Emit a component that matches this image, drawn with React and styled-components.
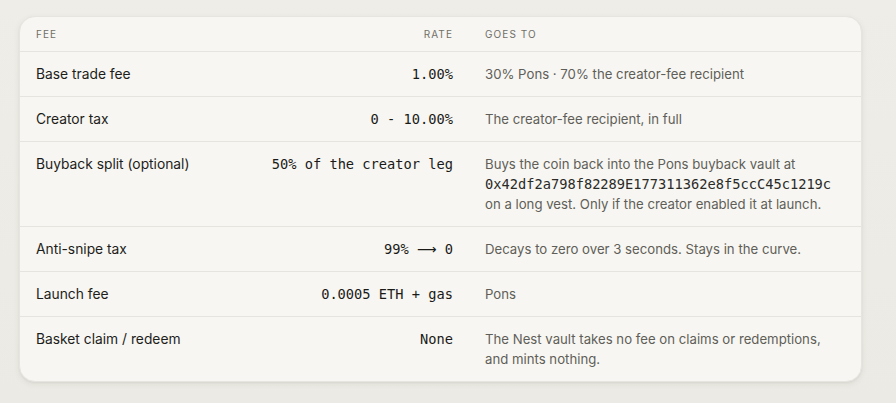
import React from "react";
import styled, { createGlobalStyle } from "styled-components";

const GlobalStyle = createGlobalStyle`
  html, body {
    margin: 0;
    padding: 0;
    background: #ecebe6;
  }
  body {
    font-family: Inter, "Noto Sans", Arial, sans-serif;
    -webkit-font-smoothing: antialiased;
  }
`;

const Page = styled.div`
  padding: 16px 34px 22px 19px;
  min-height: 403px;
  box-sizing: border-box;
  background: linear-gradient(180deg, #eeede8 0%, #ebeae4 100%);
`;

const Card = styled.div`
  background: #f7f6f2;
  border: 1px solid #e6e5df;
  border-radius: 16px;
  box-shadow: 0 2px 6px rgba(60, 58, 45, 0.08), 0 1px 2px rgba(60, 58, 45, 0.05);
  overflow: hidden;
`;

const Row = styled.div`
  display: grid;
  grid-template-columns: 220px 229px 1fr;
  border-top: ${(p) => (p.$head ? "none" : "1px solid #e5e4de")};
`;

const Cell = styled.div`
  padding: ${(p) => (p.$head ? "12px 16px 11px" : "12px 16px")};
  text-align: ${(p) => (p.$right ? "right" : "left")};
  font-size: 13.8px;
  line-height: 20px;
  color: #1d1d1a;
`;

const HeadLabel = styled.span`
  display: block;
  font-size: 10px;
  line-height: 11px;
  letter-spacing: 1.1px;
  text-transform: uppercase;
  color: #706f69;
`;

const Rate = styled.div`
  font-family: "DejaVu Sans Mono", "Liberation Mono", monospace;
  font-size: 13.7px;
  line-height: 20px;
  color: #1a1a17;
`;

const Address = styled.span`
  font-family: "DejaVu Sans Mono", "Liberation Mono", monospace;
  font-size: 13.7px;
  line-height: 1;
  color: #2a2a27;
`;

const Arrow = styled.span`
  font-family: "DejaVu Sans", sans-serif;
`;

const Note = styled.div`
  color: #5f5e58;
  font-size: 13.2px;
`;

const rows = [
  {
    fee: "Base trade fee",
    rate: "1.00%",
    to: "30% Pons · 70% the creator-fee recipient",
  },
  { fee: "Creator tax", rate: "0 - 10.00%", to: "The creator-fee recipient, in full" },
  {
    fee: "Buyback split (optional)",
    rate: "50% of the creator leg",
    to: (
      <>
        Buys the coin back into the Pons buyback vault at{" "}
        <Address>0x42df2a798f82289E177311362e8f5ccC45c1219c</Address> on a long
        vest. Only if the creator enabled it at launch.
      </>
    ),
  },
  {
    fee: "Anti-snipe tax",
    rate: (
      <>
        99% <Arrow>⟶</Arrow> 0
      </>
    ),
    to: "Decays to zero over 3 seconds. Stays in the curve.",
  },
  { fee: "Launch fee", rate: "0.0005 ETH + gas", to: "Pons" },
  {
    fee: "Basket claim / redeem",
    rate: "None",
    to: "The Nest vault takes no fee on claims or redemptions, and mints nothing.",
  },
];

export default function App() {
  return (
    <>
      <GlobalStyle />
      <Page>
        <Card>
          <Row $head>
            <Cell $head>
              <HeadLabel>Fee</HeadLabel>
            </Cell>
            <Cell $head $right>
              <HeadLabel>Rate</HeadLabel>
            </Cell>
            <Cell $head>
              <HeadLabel>Goes to</HeadLabel>
            </Cell>
          </Row>
          {rows.map((r, i) => (
            <Row key={i}>
              <Cell>{r.fee}</Cell>
              <Cell $right>
                <Rate>{r.rate}</Rate>
              </Cell>
              <Cell>
                <Note>{r.to}</Note>
              </Cell>
            </Row>
          ))}
        </Card>
      </Page>
    </>
  );
}
